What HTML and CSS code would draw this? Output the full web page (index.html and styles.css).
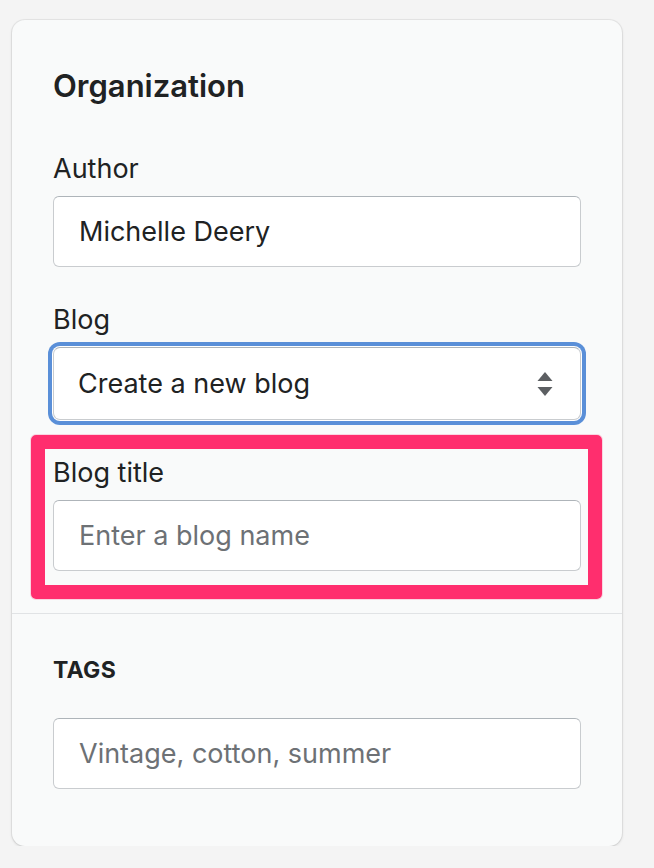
FILE: index.html
```html
<!DOCTYPE html>
<html lang="en">
<head>
<meta charset="utf-8">
<title>Organization</title>
<link rel="stylesheet" href="styles.css">
</head>
<body>
<div class="card">
  <section class="section section-main">
    <h2 class="heading">Organization</h2>
    <div class="field field-first">
      <label class="label">Author</label>
      <div class="input"><span class="value">Michelle Deery</span></div>
    </div>
    <div class="field">
      <label class="label">Blog</label>
      <div class="input select">
        <span class="value">Create a new blog</span>
        <svg class="arrows" width="16" height="24" viewBox="0 0 16 24" aria-hidden="true">
          <path d="M8 0 L15.5 9 L0.5 9 Z" fill="#5c5f62"/>
          <path d="M0.5 15 L15.5 15 L8 24 Z" fill="#5c5f62"/>
        </svg>
      </div>
    </div>
    <div class="field field-highlight">
      <label class="label">Blog title</label>
      <div class="input"><span class="placeholder">Enter a blog name</span></div>
    </div>
  </section>
  <section class="section section-tags">
    <h3 class="subheading">TAGS</h3>
    <div class="input"><span class="placeholder">Vintage, cotton, summer</span></div>
  </section>
</div>
</body>
</html>
```

FILE: styles.css
```css
* {
  box-sizing: border-box;
}

body {
  margin: 0;
  background: #f4f4f4;
  font-family: Inter, "Noto Sans", "Liberation Sans", sans-serif;
  color: #202223;
}

.card {
  margin: 20px 0 0 12px;
  width: 610px;
  background: #f9fafa;
  border-radius: 13px;
  box-shadow: 0 0 0 1px rgba(0, 0, 0, 0.05), 0 1px 3px rgba(0, 0, 0, 0.14);
}

.section {
  padding: 0 41px;
}

.section-main {
  padding-top: 46px;
  padding-bottom: 42px;
}

.section-tags {
  border-top: 1px solid #e1e3e5;
  padding-top: 42px;
  padding-bottom: 57px;
}

.heading {
  margin: 0;
  font-size: 31px;
  line-height: 40px;
  font-weight: 600;
}

.subheading {
  margin: 0 0 34px;
  font-size: 23px;
  line-height: 28px;
  font-weight: 700;
  letter-spacing: 0.3px;
}

.field {
  margin-top: 37px;
}

.field-first {
  margin-top: 47px;
}

.label {
  display: block;
  font-size: 27px;
  line-height: 32px;
  margin-bottom: 11px;
}

.input {
  display: flex;
  align-items: center;
  height: 71px;
  padding: 0 25px;
  background: #ffffff;
  border: 1px solid #c9cccf;
  border-top-color: #aeb4b9;
  border-radius: 6px;
  font-size: 27px;
}

.value {
  color: #202223;
}

.placeholder {
  color: #6d7175;
}

.select {
  height: 73px;
  padding-left: 24px;
  padding-right: 27px;
  justify-content: space-between;
  box-shadow: 0 0 0 1px #ffffff, 0 0 0 5px #5a8fd8;
  border-radius: 7px;
}

.arrows {
  display: block;
}

.field-highlight {
  position: relative;
}

.field-highlight::before {
  content: "";
  position: absolute;
  top: -22px;
  left: -22px;
  right: -21px;
  bottom: -28px;
  border: 14px solid #ff2e6e;
  border-radius: 5px;
  box-shadow: 0 0 0 1px rgba(255, 46, 110, 0.18);
  pointer-events: none;
}
```
